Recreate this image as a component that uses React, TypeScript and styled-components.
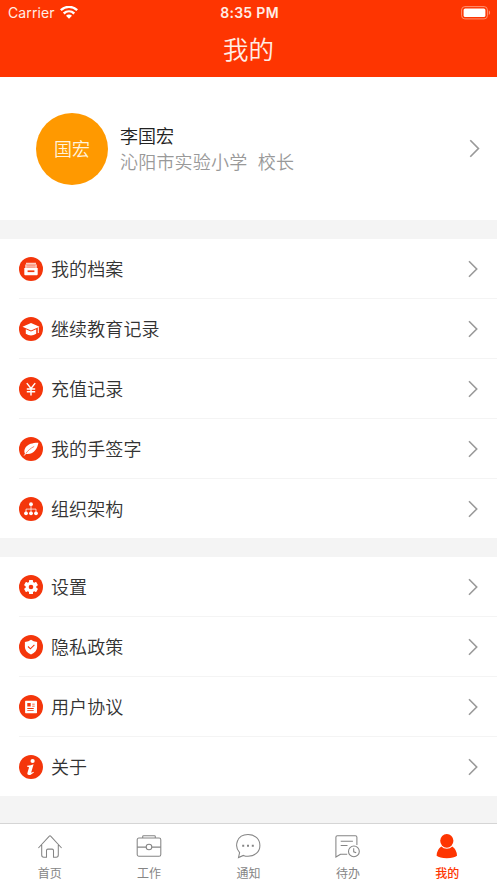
import React from 'react';
import styled, { createGlobalStyle } from 'styled-components';

const RED = '#fe3501';
const ICON_RED = '#f4360b';

const GlobalStyle = createGlobalStyle`
  * { box-sizing: border-box; }
  body {
    margin: 0;
    background: #f4f4f4;
    font-family: "Noto Sans CJK SC", sans-serif;
  }
`;

const Screen = styled.main`
  display: flex;
  flex-direction: column;
  width: 497px;
  height: 883px;
  overflow: hidden;
  background: #f4f4f4;
`;

const Header = styled.header`
  height: 77px;
  flex: none;
  background: ${RED};
  color: #ffede6;
`;

const StatusBar = styled.div`
  display: grid;
  grid-template-columns: 1fr auto 1fr;
  align-items: center;
  height: 25px;
  padding: 0 6px 0 8px;
  font-family: Inter, sans-serif;
  font-size: 14px;
  line-height: 25px;
`;

const Carrier = styled.div`
  display: flex;
  align-items: center;
  gap: 5px;
  line-height: 24px;
  letter-spacing: 0.1px;
`;

const Clock = styled.div`
  font-size: 14px;
  font-weight: 600;
  line-height: 24px;
  letter-spacing: 0.3px;
`;

const StatusRight = styled.div`
  display: flex;
  justify-content: flex-end;
`;

const Title = styled.h1`
  margin: 0;
  font-size: 25.5px;
  font-weight: 350;
  line-height: 46px;
  text-align: center;
`;

const Profile = styled.section`
  display: flex;
  align-items: center;
  flex: none;
  height: 143px;
  padding: 0 17px 0 36px;
  background: #fff;
`;

const Avatar = styled.div`
  width: 72px;
  height: 72px;
  border-radius: 50%;
  background: #ff9900;
  color: #fff3dc;
  font-size: 18px;
  font-weight: 350;
  line-height: 71px;
  text-align: center;
`;

const Identity = styled.div`
  flex: 1;
  margin-left: 12px;
  padding-bottom: 2px;
  font-size: 18px;
  font-weight: 350;
  line-height: 26px;
`;

const Name = styled.div`
  color: #222;
`;

const Role = styled.div`
  color: #999;
  white-space: pre;
  letter-spacing: 0.2px;
  word-spacing: 1px;
`;

const Group = styled.section<{ $gap: number }>`
  flex: none;
  margin-top: ${(p) => p.$gap}px;
  background: #fff;
`;

const Row = styled.div`
  display: flex;
  align-items: center;
  height: 60px;
  margin-left: 19px;
  padding-right: 19px;
  border-bottom: 1px solid #f4f4f4;

  &:last-child {
    height: 59px;
    border-bottom: 0;
  }
`;

const RowLabel = styled.span`
  flex: 1;
  margin-left: 8px;
  padding-bottom: 2px;
  color: #333;
  font-size: 18px;
  font-weight: 350;
  line-height: 26px;
  letter-spacing: 0.1px;
`;

const TabBar = styled.nav`
  display: grid;
  grid-template-columns: repeat(5, 1fr);
  flex: none;
  height: 60px;
  margin-top: auto;
  border-top: 1px solid #d5d5d5;
  background: #fff;
`;

const Tab = styled.div<{ $active?: boolean }>`
  display: flex;
  flex-direction: column;
  align-items: center;
  padding-top: 9px;
  color: ${(p) => (p.$active ? RED : '#858585')};
  font-size: 12px;
  font-weight: ${(p) => (p.$active ? 500 : 400)};
  line-height: 18px;

  svg { margin-bottom: 4px; }
`;

const Chevron = ({ large }: { large?: boolean }) => (
  <svg width={large ? 11 : 10} height={large ? 19 : 18} viewBox="0 0 10 18" fill="none" stroke="#999" strokeWidth="1.6">
    <path d="M1 1.2 8.7 9 1 16.8" />
  </svg>
);

const Wifi = () => (
  <svg width="18" height="14" viewBox="0 0 18 14" fill="none" stroke="#fff" strokeWidth="2.4">
    <path d="M.8 4.2C5.6-.2 12.4-.2 17.2 4.2M3.7 7.5C6.9 4.6 11.1 4.6 14.3 7.5" />
    <path d="M6 9.7C7.7 8.1 10.3 8.1 12 9.7L9 12.7Z" fill="#fff" stroke="none" />
  </svg>
);

const Battery = () => (
  <svg width="30" height="14" viewBox="0 0 30 14">
    <rect x=".6" y=".6" width="25.8" height="12.3" rx="3.3" fill="none" stroke="#ff9172" />
    <rect x="2.6" y="2.4" width="21.8" height="8.7" rx="1.6" fill="#fff" />
    <path d="M27.8 4.6c1.7.6 1.7 3.8 0 4.4Z" fill="#ff9172" />
  </svg>
);

const cog = Array.from({ length: 6 }, (_, i) => (
  <rect key={i} x="10" y="5" width="4" height="4" rx=".6" transform={`rotate(${i * 60} 12 12)`} />
));

const glyphs: Record<string, React.ReactNode> = {
  archive: (
    <>
      <path d="M7 5.8h10v1.4H7ZM6.2 7.5h11.6v4H6.2Z" opacity=".76" />
      <path d="M5.3 11h13.4v6.3q0 .9-.9.9H6.2q-.9 0-.9-.9Z" />
      <rect x="8.6" y="13.4" width="6.8" height="1.7" fill={ICON_RED} />
      <path d="M7.5 8.7h9M7.5 10.2h9" stroke={ICON_RED} strokeWidth=".4" />
    </>
  ),
  education: (
    <>
      <path d="M3.5 9.8 12 5.9l8.5 3.9-8.5 3.7Z" />
      <path d="M6.8 12.2 12 14.5l5.2-2.3v4.6Q12 20 6.8 16.8Z" />
      <path d="M19.3 10.2v5.8" fill="none" stroke="#fff" strokeWidth="1" />
    </>
  ),
  yen: (
    <path d="m7.8 6.1 4.2 5.4 4.2-5.4M12 11.5v6.9M7.8 11.9h8.4M7.8 14.7h8.4" fill="none" stroke="#fff" strokeWidth="1.45" />
  ),
  feather: (
    <>
      <path d="M6 16.9C4 12.7 7.2 8.4 11.6 6.8c2.3-.8 5.8-1.3 7.8-1.1-.5 2.8-1.4 5.3-3 7.3-2.2 2.9-5.9 4.7-9.5 3.8Z" />
      <path d="M6.8 16.6c1.8-2.9 4.6-5.2 8.4-7.2" fill="none" stroke={ICON_RED} strokeWidth=".6" />
      <path d="m5.2 18.5 1.9-2.4" stroke="#fff" />
    </>
  ),
  organization: (
    <>
      <circle cx="12" cy="7.2" r="1.9" />
      <circle cx="7" cy="16.3" r="1.9" />
      <circle cx="12" cy="16.3" r="1.9" />
      <circle cx="17" cy="16.3" r="1.9" />
      <path d="M12 9v6M7 15v-2.9h10V15" fill="none" stroke="#fff" strokeWidth=".75" />
    </>
  ),
  settings: (
    <>
      <circle cx="12" cy="12" r="5.4" />
      {cog}
      <circle cx="12" cy="12" r="2.3" fill={ICON_RED} />
    </>
  ),
  privacy: (
    <>
      <path d="M12 4.8q2.3 2.1 6.1 2.1V12q0 4.7-6.1 7.4Q5.9 16.7 5.9 12V6.9q3.8 0 6.1-2.1Z" />
      <path d="m9 11.5 2.4 2.3 4-4" fill="none" stroke={ICON_RED} strokeWidth="1.1" />
    </>
  ),
  agreement: (
    <>
      <rect x="6.1" y="5.8" width="11.9" height="12.4" rx=".6" />
      <path d="M8.3 8h3.4v3.4H8.3ZM13.2 8.8h2.5v.8h-2.5ZM13.2 10.7h2.5v.7h-2.5ZM8.3 13.1h6.4v.9H8.3ZM8.3 15.2h6.4v.9H8.3Z" fill={ICON_RED} />
    </>
  ),
  about: (
    <>
      <circle cx="13.6" cy="6" r="2.1" />
      <path d="M8.1 10.7q3.9-.3 6.5-1.4l-2.2 7.5q-.4 1.2.6.8l1.5-.9.4.7q-5 4.1-6.4 1.9-.4-.7.1-2.1l1.4-4.6q.2-.9-1.9-.9Z" />
    </>
  ),
};

const RoundIcon = ({ name }: { name: string }) => (
  <svg width="24" height="24" viewBox="0 0 24 24" fill="#fff">
    <circle cx="12" cy="12" r="12" fill={ICON_RED} />
    {glyphs[name]}
  </svg>
);

const tabGlyphs: Record<string, React.ReactNode> = {
  home: (
    <path d="M1.4 15 12.1 3.3Q13 2.3 13.9 3.3L24.6 15M4.7 12v10q0 2.2 2.1 2.2h2.7v-6.7q0-1.4 1.4-1.4h4.2q1.4 0 1.4 1.4v6.7h2.7q2.1 0 2.1-2.2V12" />
  ),
  work: (
    <>
      <rect x="1.2" y="5" width="23.6" height="18.2" rx="1.7" />
      <path d="M6.7 5V3.6q0-.9.9-.9h10.8q.9 0 .9.9V5M1.2 14.1h8.9M15.9 14.1h8.9" />
      <circle cx="13" cy="14" r="2.8" />
    </>
  ),
  notice: (
    <>
      <path d="M4.6 19.6C-1 13.5 1.5 1.5 13 1.5c7.2 0 11.9 4.8 11.9 11S20.1 23.3 13 23.3c-1.7 0-3.2-.3-4.6-.9L3.5 24.5Z" />
      <path d="M7.2 11.7h2v2h-2ZM12 11.7h2v2h-2ZM16.8 11.7h2v2h-2Z" fill="currentColor" stroke="none" />
    </>
  ),
  todo: (
    <>
      <path d="M12.2 21.3H5.5L.9 24V4.3q0-1.5 1.5-1.5h18q1.5 0 1.5 1.5V12M5.7 8.2h12.2M5.7 12.5h6.8" />
      <circle cx="18.9" cy="18.4" r="5.4" />
      <path d="M18.7 15.3v3.5l2.5 1" />
    </>
  ),
  mine: (
    <g fill="currentColor" stroke="none">
      <ellipse cx="12.8" cy="7.8" rx="6.6" ry="6.9" />
      <path d="M7.3 13.5q2.2 2.3 5.5 2.3t5.5-2.3q4.6 3.2 4.7 9.3Q20.1 25.2 12.8 25.2T2.6 22.8q.1-6.1 4.7-9.3Z" />
    </g>
  ),
};

const TabIcon = ({ name }: { name: string }) => (
  <svg width="26" height="27" viewBox="0 0 26 27" fill="none" stroke="currentColor" strokeWidth="1.05">
    {tabGlyphs[name]}
  </svg>
);

const records = [
  ['archive', '我的档案'],
  ['education', '继续教育记录'],
  ['yen', '充值记录'],
  ['feather', '我的手签字'],
  ['organization', '组织架构'],
];

const preferences = [
  ['settings', '设置'],
  ['privacy', '隐私政策'],
  ['agreement', '用户协议'],
  ['about', '关于'],
];

const tabs = [
  ['home', '首页'],
  ['work', '工作'],
  ['notice', '通知'],
  ['todo', '待办'],
  ['mine', '我的'],
];

const MenuGroup = ({ items, gap }: { items: string[][]; gap: number }) => (
  <Group $gap={gap}>
    {items.map(([icon, label]) => (
      <Row key={icon}>
        <RoundIcon name={icon} />
        <RowLabel>{label}</RowLabel>
        <Chevron />
      </Row>
    ))}
  </Group>
);

export default function App() {
  return (
    <>
      <GlobalStyle />
      <Screen>
        <Header>
          <StatusBar>
            <Carrier>Carrier<Wifi /></Carrier>
            <Clock>8:35 PM</Clock>
            <StatusRight><Battery /></StatusRight>
          </StatusBar>
          <Title>我的</Title>
        </Header>
        <Profile>
          <Avatar>国宏</Avatar>
          <Identity>
            <Name>李国宏</Name>
            <Role>{'沁阳市实验小学  校长'}</Role>
          </Identity>
          <Chevron large />
        </Profile>
        <MenuGroup items={records} gap={19} />
        <MenuGroup items={preferences} gap={19} />
        <TabBar>
          {tabs.map(([icon, label]) => (
            <Tab key={icon} $active={icon === 'mine'}>
              <TabIcon name={icon} />
              {label}
            </Tab>
          ))}
        </TabBar>
      </Screen>
    </>
  );
}
